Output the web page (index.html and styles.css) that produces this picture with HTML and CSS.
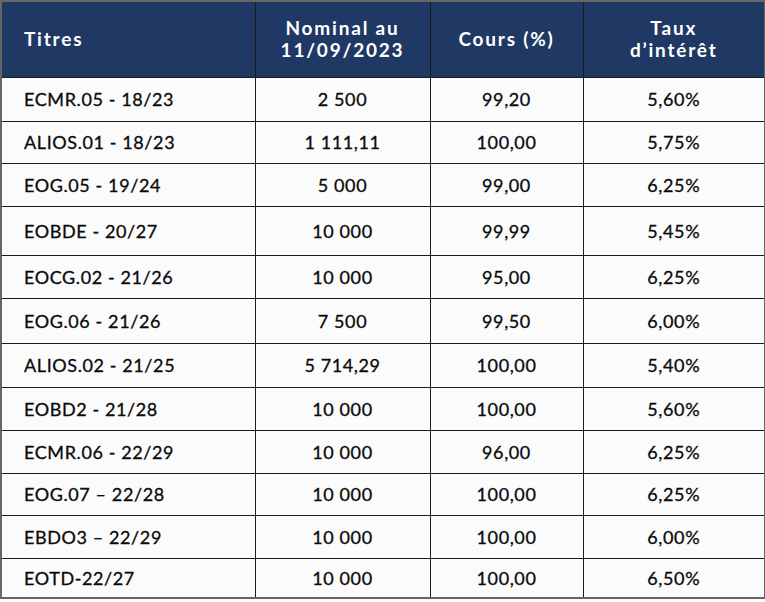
FILE: index.html
```html
<!DOCTYPE html>
<html lang="fr">
<head>
<meta charset="utf-8">
<title>Titres</title>
<link rel="stylesheet" href="styles.css">
</head>
<body>
<table class="bonds">
  <colgroup>
    <col class="c-title">
    <col class="c-nominal">
    <col class="c-cours">
    <col class="c-taux">
  </colgroup>
  <thead>
    <tr class="head">
      <th class="left">Titres</th>
      <th>Nominal au<br>11/09/2023</th>
      <th>Cours (%)</th>
      <th>Taux<br>d’intérêt</th>
    </tr>
  </thead>
  <tbody>
    <tr class="first"><td class="left">ECMR.05 - 18/23</td><td>2 500</td><td>99,20</td><td>5,60%</td></tr>
    <tr class="short"><td class="left">ALIOS.01 - 18/23</td><td>1 111,11</td><td>100,00</td><td>5,75%</td></tr>
    <tr><td class="left">EOG.05 - 19/24</td><td>5 000</td><td>99,00</td><td>6,25%</td></tr>
    <tr class="tall"><td class="left">EOBDE - 20/27</td><td>10 000</td><td>99,99</td><td>5,45%</td></tr>
    <tr><td class="left">EOCG.02 - 21/26</td><td>10 000</td><td>95,00</td><td>6,25%</td></tr>
    <tr class="mid"><td class="left">EOG.06 - 21/26</td><td>7 500</td><td>99,50</td><td>6,00%</td></tr>
    <tr class="first"><td class="left">ALIOS.02 - 21/25</td><td>5 714,29</td><td>100,00</td><td>5,40%</td></tr>
    <tr><td class="left">EOBD2 - 21/28</td><td>10 000</td><td>100,00</td><td>5,60%</td></tr>
    <tr><td class="left">ECMR.06 - 22/29</td><td>10 000</td><td>96,00</td><td>6,25%</td></tr>
    <tr class="short"><td class="left">EOG.07 – 22/28</td><td>10 000</td><td>100,00</td><td>6,25%</td></tr>
    <tr><td class="left">EBDO3 – 22/29</td><td>10 000</td><td>100,00</td><td>6,00%</td></tr>
    <tr class="last"><td class="left">EOTD-22/27</td><td>10 000</td><td>100,00</td><td>6,50%</td></tr>
  </tbody>
</table>
</body>
</html>
```
FILE: styles.css
```css
html, body {
  margin: 0;
  padding: 0;
  background: #ffffff;
}
body {
  font-family: "Lato", "Liberation Sans", sans-serif;
}
.bonds {
  border-collapse: collapse;
  table-layout: fixed;
  width: 764px;
  border: 2px solid #666666;
  background: #fbfbfb;
  color: #0a0a0a;
  font-size: 18px;
  letter-spacing: 0.6px;
}
.c-title { width: 254px; }
.c-nominal { width: 175px; }
.c-cours { width: 153px; }
.c-taux { width: 182px; }

.bonds th,
.bonds td {
  border: 1px solid #1a1a1a;
  padding: 0 2px;
  text-align: center;
  vertical-align: middle;
  white-space: nowrap;
}
.bonds td {
  -webkit-text-stroke: 0.3px #0a0a0a;
}
.bonds th {
  background: #203864;
  color: #ffffff;
  font-weight: 700;
  font-size: 19px;
  line-height: 22px;
  letter-spacing: 1.8px;
}
.bonds .left {
  text-align: left;
  padding-left: 22px;
}
.head { height: 76px; }
.bonds tbody tr { height: 43px; }
.bonds tbody tr.first { height: 44px; }
.bonds tbody tr.short { height: 42px; }
.bonds tbody tr.tall { height: 49px; }
.bonds tbody tr.mid { height: 45px; }
.bonds tbody tr.last { height: 40px; }
```
